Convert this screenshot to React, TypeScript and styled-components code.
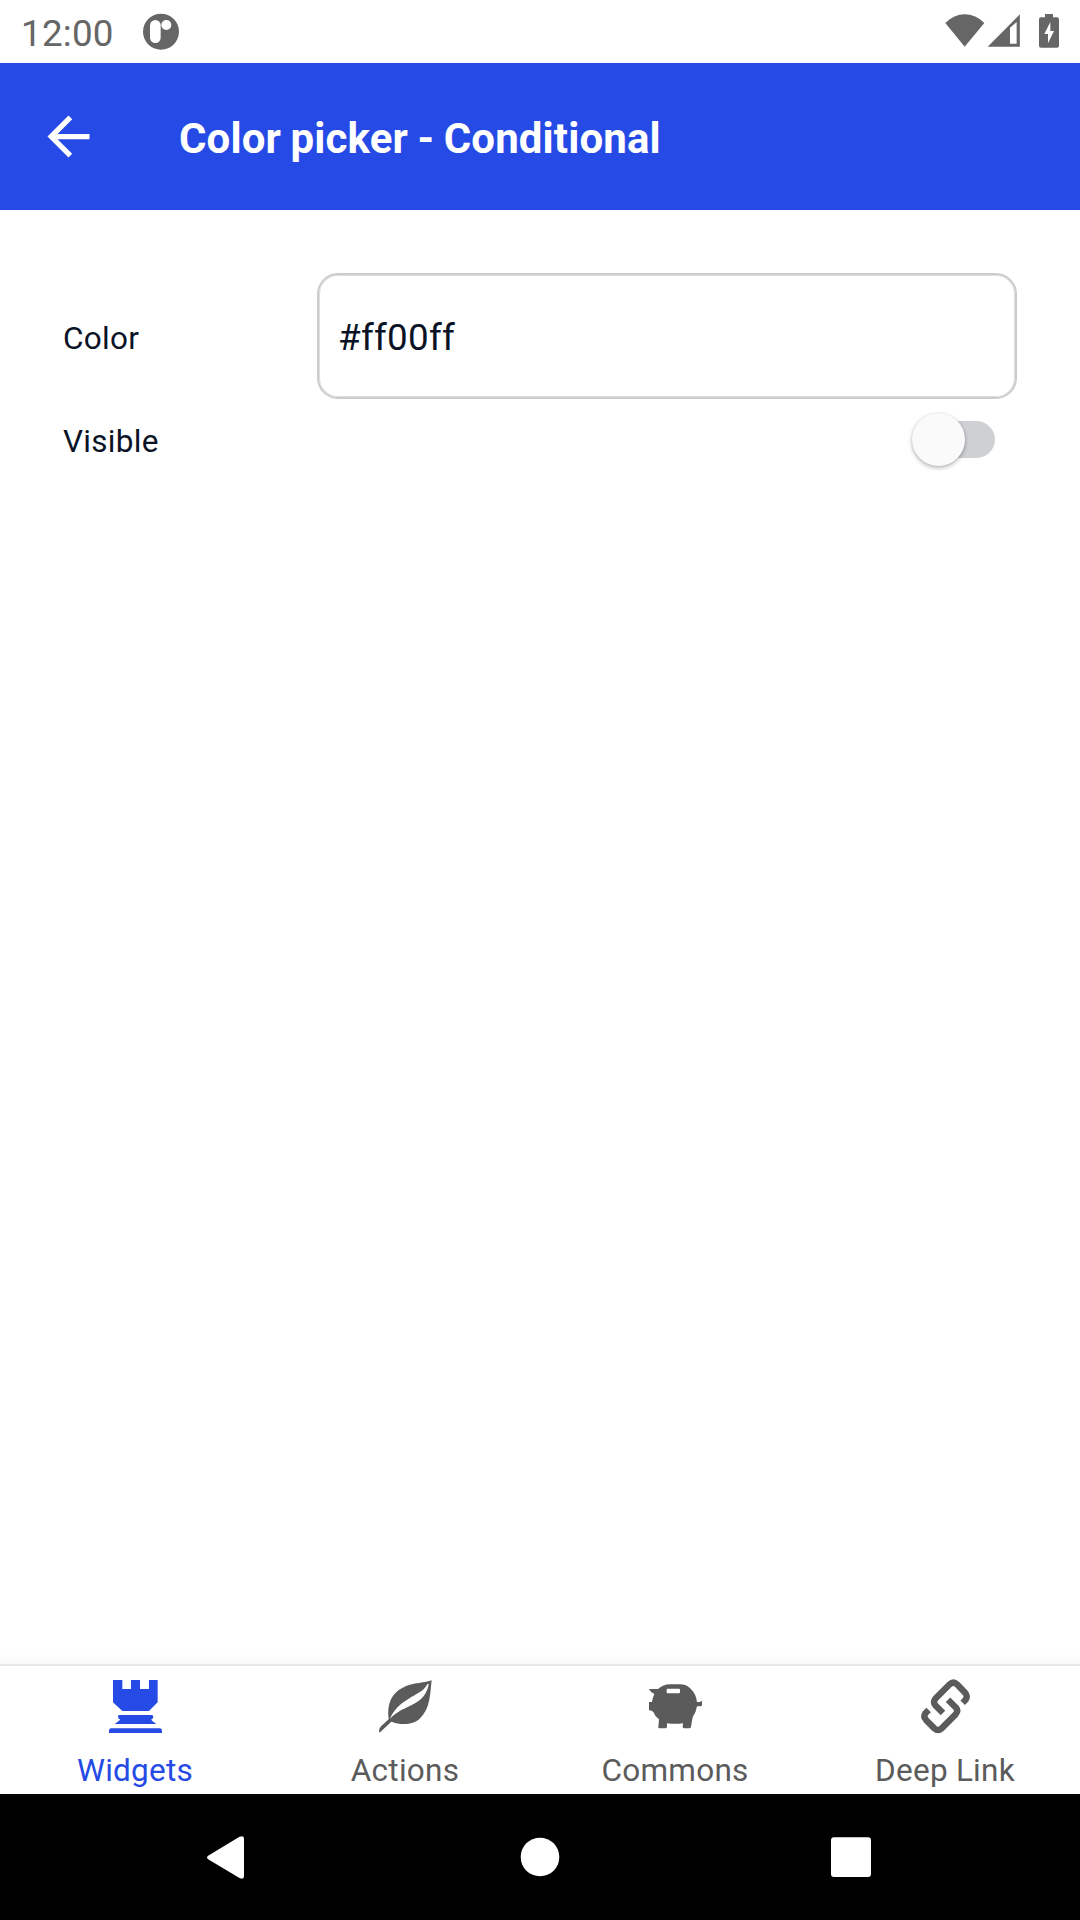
import React, { useState } from "react";
import styled, { createGlobalStyle } from "styled-components";

const Global = createGlobalStyle`
  * { box-sizing: border-box; }
  body { margin: 0; background: #fff; }
`;

const Screen = styled.div`
  width: 1080px;
  height: 1920px;
  display: flex;
  flex-direction: column;
  background: #ffffff;
  color: #0a1326;
  font-family: Roboto, "Liberation Sans", sans-serif;
  overflow: hidden;
`;

const StatusBar = styled.div`
  height: 63px;
  flex: none;
  display: flex;
  align-items: flex-start;
  padding: 12px 20px 0 21px;
  color: #666666;
`;

const Clock = styled.span`
  width: 121px;
  font-size: 36.75px;
  line-height: 43px;
  letter-spacing: 0.25px;
`;

const StatusIcons = styled.div`
  margin-left: auto;
  display: flex;
`;

const StatusSvg = styled.svg<{ $gap?: number }>`
  display: block;
  margin-left: ${(p) => p.$gap ?? 0}px;
`;

const Header = styled.header`
  height: 147px;
  flex: none;
  display: flex;
  align-items: center;
  padding-left: 37px;
  gap: 79px;
  background: #264ae5;
  color: #ffffff;
`;

const BackButton = styled.button`
  width: 63px;
  height: 63px;
  padding: 0;
  border: 0;
  background: none;
  color: inherit;
`;

const Title = styled.h1`
  margin: 5px 0 0;
  font-size: 42px;
  line-height: 50px;
  font-weight: 700;
  letter-spacing: 0.12px;
  word-spacing: -1px;
  white-space: nowrap;
`;

const Form = styled.main`
  flex: 1;
  padding: 63px 63px 0;
`;

const Row = styled.div<{ $height: number }>`
  height: ${(p) => p.$height}px;
  display: flex;
  align-items: center;
`;

const Label = styled.label`
  width: 254px;
  padding-top: 5px;
  font-size: 31.5px;
  line-height: 37px;
  letter-spacing: 0.3px;
`;

const ColorInput = styled.input`
  width: 700px;
  height: 126px;
  padding: 2px 19px 0;
  border: 2px solid #cccccc;
  box-shadow: inset 0 0 0 1px #dedede;
  border-radius: 21px;
  background: #ffffff;
  color: #0a1326;
  font: 36.75px/44px Roboto, "Liberation Sans", sans-serif;
  letter-spacing: 0.3px;
  outline: none;
`;

const Switch = styled.button`
  width: 83px;
  height: 54px;
  margin-left: auto;
  margin-right: 22px;
  padding: 0;
  border: 0;
  background: none;
  display: flex;
  align-items: center;
`;

const Thumb = styled.span`
  width: 53px;
  height: 53px;
  flex: none;
  border-radius: 50%;
  background: #fafafa;
  box-shadow: 0 2px 4px rgba(0, 0, 0, 0.28), 0 0 2px rgba(0, 0, 0, 0.1);
  z-index: 1;
`;

const Track = styled.span`
  width: 60px;
  height: 37px;
  margin-left: -30px;
  flex: none;
  border-radius: 19px;
  background: #ced0d3;
`;

const Fade = styled.div`
  height: 10px;
  flex: none;
  background: linear-gradient(#ffffff, #f9f9f9);
`;

const TabBar = styled.nav`
  height: 130px;
  flex: none;
  display: grid;
  grid-template-columns: repeat(4, 1fr);
  border-top: 2px solid #e7e7e7;
  background: #ffffff;
`;

const Tab = styled.a<{ $active?: boolean }>`
  display: flex;
  flex-direction: column;
  align-items: center;
  padding-top: 4px;
  gap: 12px;
  color: ${(p) => (p.$active ? "#264ae5" : "#5b5b5b")};
  font-size: 31.5px;
  line-height: 37px;
  letter-spacing: 0.25px;
  white-space: nowrap;
`;

const NavBar = styled.footer`
  height: 126px;
  flex: none;
  display: flex;
  align-items: center;
  justify-content: space-between;
  padding: 0 198px 0 194px;
  background: #000000;
`;

const tabs = [
  {
    label: "Widgets",
    icon: (
      <>
        <path d="M39 30H67V57H93V30H120V57H147V30H173V97L147 123H67L39 97Z" />
        <path d="M58 135H155Q160 135 160 140Q160 146 154 148Q154 151 158 154L169 162H44L55 154Q60 151 60 148Q54 146 54 140Q54 135 58 135Z" />
        <path d="M27 189V182Q27 175 34 175H179Q186 175 186 182V189Z" />
      </>
    ),
  },
  {
    label: "Actions",
    icon: (
      <path d="M185 31C168 39 130 37 98 53C64 70 50 103 56 148L33 169Q26 176 27 187L31 186L64 155C95 167 132 163 149 146C181 117 180 73 185 31ZM176 43C172 69 157 88 136 99C107 115 79 124 60 147C69 121 91 101 116 86C141 71 162 63 172 43Q174 40 176 43Z" />
    ),
  },
  {
    label: "Commons",
    icon: (
      <path
        fillRule="evenodd"
        d="M27 57H54Q69 43 90 43H120Q139 43 152 56Q169 73 171 96H181Q182 96 182 93Q184 91 186 95V105Q186 109 181 109H171Q169 125 158 141L153 170Q152 175 147 175H133Q128 175 128 170L129 160Q105 163 81 160V170Q81 175 76 175H59Q54 175 55 170L57 148Q45 140 40 126Q37 122 27 121V96H36Q38 82 43 72Q30 65 27 57ZM83 56Q80 56 80 59V67Q80 70 83 70H117Q120 70 120 67V59Q120 56 117 56Z"
      />
    ),
  },
  {
    label: "Deep Link",
    icon: (
      <g fill="none" stroke="currentColor" strokeWidth="19">
        <path d="M99 129L76 106Q68 96 76 86L119 43Q130 33 141 43L166 69Q174 78 167 89L158 98" />
        <path d="M114 89L138 113Q146 122 137 133L95 175Q84 185 73 175L48 150Q39 140 46 130L56 120" />
      </g>
    ),
  },
];

export default function App() {
  const [color, setColor] = useState("#ff00ff");
  return (
    <>
      <Global />
      <Screen>
        <StatusBar>
          <Clock>12:00</Clock>
          <StatusSvg width="38" height="38" viewBox="426 36 114 114">
            <circle cx="483" cy="95" r="54" fill="#666" />
            <rect x="450" y="60" width="32" height="69" rx="16" fill="#fff" />
            <circle cx="499" cy="75" r="15" fill="#fff" />
          </StatusSvg>
          <StatusIcons>
            <StatusSvg width="40" height="36" viewBox="74 36 120 108" fill="currentColor">
              <path d="M75 69Q101 43 133 43Q166 43 192 69L133 140Z" />
            </StatusSvg>
            <StatusSvg $gap={2} width="34" height="36" viewBox="201 36 102 108" fill="currentColor">
              <path fillRule="evenodd" d="M203 140.500L299.500 43V140.500ZM270 83V131H290V66Z" />
            </StatusSvg>
            <StatusSvg $gap={17} width="22" height="36" viewBox="354 36 66 108" fill="currentColor">
              <path
                fillRule="evenodd"
                d="M375 42H399V52H411Q417 52 417 58V137Q417 143 411 143H363Q357 143 357 137V58Q357 52 363 52H375ZM391 66L373 102H384V130L402 93H391Z"
              />
            </StatusSvg>
          </StatusIcons>
        </StatusBar>
        <Header>
          <BackButton aria-label="Back">
            <svg width="63" height="63" viewBox="0 0 24 24" fill="currentColor">
              <path d="M20 11H7.830l5.590-5.590L12 4l-8 8 8 8 1.410-1.410L7.830 13H20z" />
            </svg>
          </BackButton>
          <Title>Color picker - Conditional</Title>
        </Header>
        <Form>
          <Row $height={126}>
            <Label htmlFor="color">Color</Label>
            <ColorInput id="color" value={color} onChange={(e) => setColor(e.target.value)} />
          </Row>
          <Row $height={80}>
            <Label>Visible</Label>
            <Switch role="switch" aria-checked={false}>
              <Thumb />
              <Track />
            </Switch>
          </Row>
        </Form>
        <Fade />
        <TabBar>
          {tabs.map((tab, i) => (
            <Tab key={tab.label} $active={i === 0}>
              <svg width="70" height="70" viewBox="0 0 210 210" fill="currentColor">
                {tab.icon}
              </svg>
              <span>{tab.label}</span>
            </Tab>
          ))}
        </TabBar>
        <NavBar>
          <svg width="63" height="63" viewBox="0 0 63 63" fill="#fff">
            <path d="M14.500 29.500L45.500 10.800Q50 9 50 13V50Q50 54 45.500 52L14.500 33.500Q11.500 31.500 14.500 29.500Z" />
          </svg>
          <svg width="63" height="63" viewBox="0 0 63 63" fill="#fff">
            <circle cx="33" cy="31" r="19.300" />
          </svg>
          <svg width="63" height="63" viewBox="0 0 63 63" fill="#fff">
            <rect x="12" y="11.300" width="40" height="39.600" rx="3" />
          </svg>
        </NavBar>
      </Screen>
    </>
  );
}
